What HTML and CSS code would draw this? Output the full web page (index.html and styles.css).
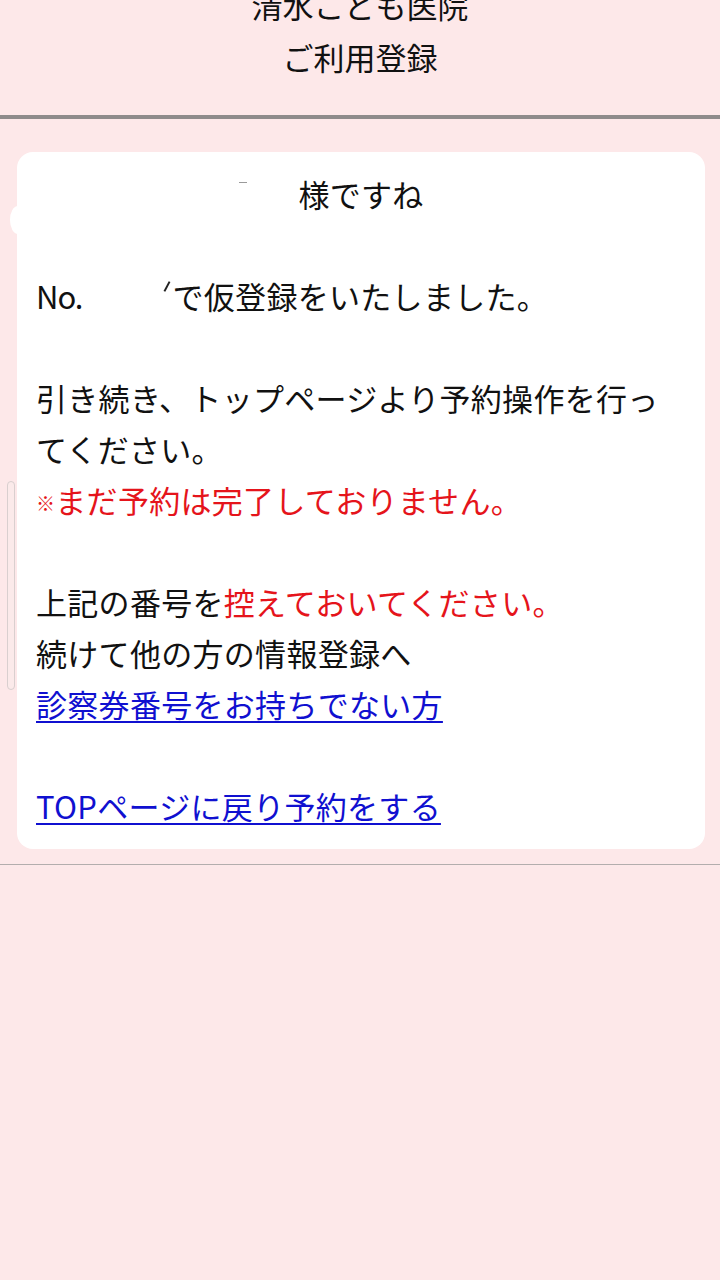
FILE: index.html
```html
<!DOCTYPE html>
<html lang="ja">
<head>
	<meta charset="UTF-8">
	<meta name="viewport" content="width=device-width, initial-scale=1">
	<title>ご利用登録</title>
	<link rel="stylesheet" href="styles.css">
</head>
<body>
	<header class="header">
		<p>清水こども医院</p>
		<p>ご利用登録</p>
	</header>

	<main class="main">
		<div class="card">
			<span class="name-mask"></span>
			<p class="greeting">様ですね</p>
			<br>
			<p><span class="latin">No.</span><span class="number-mask"><span class="number-tail"></span></span>で仮登録をいたしました。</p>
			<br>
			<p>引き続き、トップページより予約操作を行ってください。</p>
			<p class="red"><span class="kome">※</span>まだ予約は完了しておりません。</p>
			<br>
			<p>上記の番号を<span class="red">控えておいてください。</span></p>
			<p>続けて他の方の情報登録へ</p>
			<p><a href="#">診察券番号をお持ちでない方</a></p>
			<br>
			<p><a href="#">TOPページに戻り予約をする</a></p>
		</div>
	</main>

	<footer class="footer"></footer>

	<!-- overlays from the phone screen -->
	<div class="edge-blob"></div>
	<div class="scroll-thumb"></div>
</body>
</html>
```

FILE: styles.css
```css
* {
	box-sizing: border-box;
	margin: 0;
	padding: 0;
}

body {
	font-family: "Noto Sans CJK JP", "Noto Sans", sans-serif;
	font-size: 31px;
	line-height: 51px;
	color: #111;
	background: #fde8e9;
	min-height: 1280px;
	position: relative;
}

.header {
	margin-top: -21px;
	padding-bottom: 32px;
	text-align: center;
	line-height: 52px;
	border-bottom: 4px solid #8f8b8b;
}

.main {
	padding: 33px 15px 15px 17px;
}

.card {
	position: relative;
	background: #fff;
	border-radius: 16px;
	padding: 16px 19px 18px;
	letter-spacing: 0.3px;
}

.greeting {
	text-align: center;
}

.name-mask {
	position: absolute;
	left: 222px;
	top: 30px;
	width: 8px;
	height: 1px;
	background: #9a9a9a;
}

.latin {
	letter-spacing: -1px;
}

.number-mask {
	display: inline-block;
	position: relative;
	width: 90px;
	height: 20px;
}

.number-tail {
	position: absolute;
	right: 4px;
	top: -8px;
	width: 2px;
	height: 11px;
	background: #222;
	transform: rotate(28deg);
}

.red {
	color: #e5141b;
}

.kome {
	font-size: 19px;
	line-height: 1;
	vertical-align: 2px;
}

a {
	color: #1010d0;
	text-decoration: underline;
	text-underline-offset: 4px;
	text-decoration-thickness: 2px;
}

.footer {
	border-top: 1px solid #b3adad;
}

.edge-blob {
	position: absolute;
	left: 10px;
	top: 206px;
	width: 16px;
	height: 28px;
	border-radius: 50%;
	background: #fff;
}

.scroll-thumb {
	position: absolute;
	left: 7px;
	top: 481px;
	width: 8px;
	height: 209px;
	border: 1px solid #d9cfcf;
	border-radius: 4px;
	background: #fbeaea;
}
```
